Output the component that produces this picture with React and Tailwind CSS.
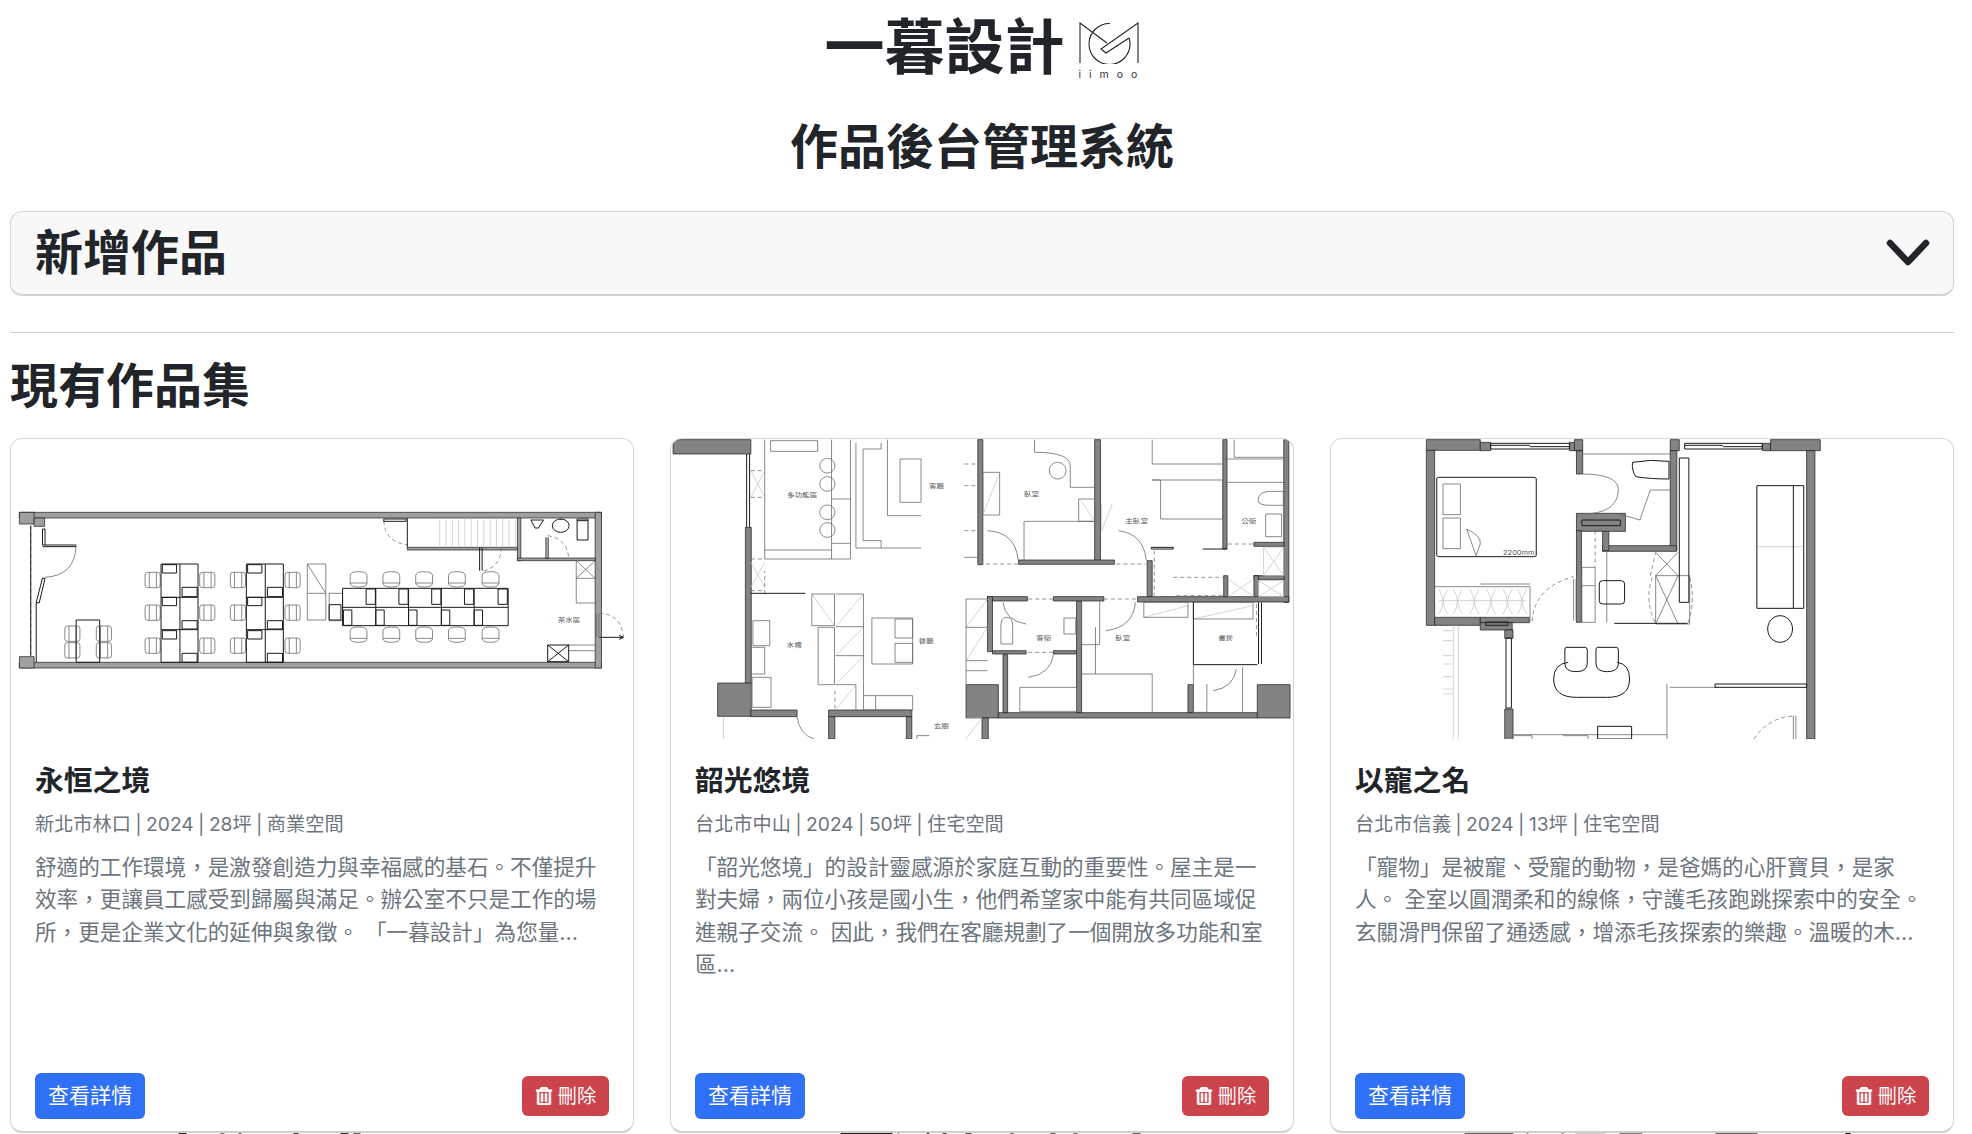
import { FaRegTrashAlt } from "react-icons/fa";

const FONT = "font-['Inter','Noto_Sans_CJK_TC',sans-serif]";

// floor plans are traced in zoom-crop units, so strokes must not scale with the box
function Plan({ box, wallFill = "#838383", walls = [], dark = "", thin = "", faint = "", dash = "", labels = [] }) {
  return (
    <svg viewBox={box} preserveAspectRatio="none" className="block h-[300px] w-full">
      {walls.map(([x, y, w, h], i) => (
        <rect key={i} x={x} y={y} width={w} height={h} fill={wallFill} stroke="#1c1c1c" strokeWidth="0.7" vectorEffect="non-scaling-stroke" />
      ))}
      <path d={faint} fill="none" stroke="#c9c9c9" strokeWidth="0.8" vectorEffect="non-scaling-stroke" />
      <path d={thin} fill="none" stroke="#6b6b6b" strokeWidth="0.8" vectorEffect="non-scaling-stroke" />
      <path d={dash} fill="none" stroke="#777" strokeWidth="0.8" strokeDasharray="4 3" vectorEffect="non-scaling-stroke" />
      <path d={dark} fill="none" stroke="#1a1a1a" strokeWidth="1" vectorEffect="non-scaling-stroke" />
      {labels.map(([x, y, t]) => (
        <text key={t + x} x={x} y={y} fontSize="18" fill="#555" textAnchor="middle">{t}</text>
      ))}
    </svg>
  );
}

const rect = (x, y, w, h) => `M${x} ${y}h${w}v${h}h${-w}z`;
const chairV = (x, y) => `M${x + 6} ${y}h${24}q6 0 6 8v30q0 8 -6 8h-24q-6 0 -6 -8v-30q0 -8 6 -8zM${x + 10} ${y}v46M${x + 27} ${y}v46`;
const chairH = (x, y) => `M${x} ${y + 12}q0 -12 20 -12t20 12v22q0 12 -20 12t-20 -12zM${x} ${y + 34}h40`;

const desks = (x) =>
  rect(x, 1090, 88, 295) + `M${x + 45} 1090V1385M${x} 1190H${x + 88}M${x} 1287H${x + 88}` +
  rect(x + 3, 1092, 34, 25) + rect(x + 50, 1160, 36, 28) + rect(x + 3, 1190, 34, 25) + rect(x + 50, 1260, 36, 25) + rect(x + 3, 1290, 34, 25) + rect(x + 50, 1358, 36, 27);
const deskChairs = (x) => [1115, 1213, 1312].map((y) => chairV(x - 38, y) + chairV(x + 92, y)).join("");

const longTable =
  rect(814, 1163, 394, 112) + "M814 1220H1208M893 1163V1220M971 1163V1220M1049 1163V1220M1127 1163V1220M893 1220V1275M971 1220V1275M1049 1220V1275M1127 1220V1275" +
  [870, 948, 1026, 1104, 1184].map((x) => rect(x, 1165, 22, 46)).join("") +
  [816, 893, 971, 1049, 1127].map((x) => rect(x, 1228, 20, 46)).join("");
const tableChairs = [832, 910, 988, 1066, 1146].map((x) => chairH(x, 1113) + chairH(x, 1279)).join("");

const plan1 = {
  box: "25 715 1480 900",
  wallFill: "#a0a0a0",
  walls: [[45, 935, 1385, 17], [45, 1385, 1385, 17], [1415, 935, 15, 467], [45, 935, 35, 35], [45, 1368, 35, 34], [80, 952, 25, 25], [968, 1040, 262, 8], [1230, 952, 8, 128], [1230, 1072, 185, 8]],
  dark:
    "M968 952V1040M100 1033H180M100 1038H180M100 1033V985H106V1033M100 1132L85 1205L92 1207L106 1134ZM85 1205V1385M72 975V1365" +
    desks(382) + desks(585) + longTable +
    rect(180, 1258, 56, 127) +
    rect(782, 1212, 28, 46) + rect(1302, 1333, 50, 50) + "M1302 1333L1352 1383M1352 1333L1302 1383M1298 1010V1075M1303 1010V1075M1425 1310H1482M1472 1304L1482 1310L1472 1316M912 955H965V962H912Z" +
    "M1262 958H1292L1280 982H1272ZM1372 955H1398V1018H1372ZM1140 1040V1110M1146 1040V1110M1372 960H1398" +
    "M1333 955V958M1313 975a20 20 0 1 0 40 0a20 20 0 1 0 -40 0",
  thin:
    "M180 1033Q178 1125 106 1130M730 1090h44v168h-44zM730 1090L774 1178M730 1178H774M782 1178h32v82h-32zM1370 1080V1207H1415M1370 1133H1415M1370 1080L1415 1133M1415 1080L1370 1133M1418 1238V1310M1424 1238V1310M1350 1333H1415M1352 1350H1415" +
    deskChairs(382) + deskChairs(585) + tableChairs + chairV(153, 1276) + chairV(228, 1276) + chairV(153, 1326) + chairV(228, 1326),
  dash: "M912 960Q915 1025 968 1032M1192 1040Q1190 1100 1146 1112M1302 1005Q1350 1015 1352 1075M1424 1238Q1478 1240 1482 1310M72 975V1365",
  faint: Array.from({ length: 13 }, (_, i) => `M${1045 + i * 15} 952V1040`).join(""),
  labels: [[1353, 1264, "茶水區"]],
};

const plan2 = {
  box: "25 25 1480 900",
  walls: [
    [30, 27, 185, 43], [202, 290, 14, 468], [136, 757, 80, 100], [215, 838, 110, 20], [400, 838, 198, 20], [400, 858, 15, 67], [585, 858, 13, 67],
    [727, 762, 77, 100], [1420, 762, 78, 100], [804, 846, 616, 16], [755, 27, 12, 375], [1033, 27, 14, 365], [852, 388, 228, 13], [1338, 27, 10, 328], [1483, 27, 12, 488],
    [1412, 335, 72, 12], [1158, 390, 12, 108], [778, 498, 95, 13], [935, 498, 120, 13], [1135, 498, 360, 16], [778, 498, 12, 165], [790, 660, 80, 10], [935, 660, 55, 10],
    [990, 512, 12, 334], [815, 672, 11, 174], [1255, 762, 13, 84], [1340, 435, 10, 63], [1412, 435, 72, 12], [1412, 435, 11, 63], [765, 862, 15, 63],
  ],
  dark: "M1423 515V700M1430 515V700M1268 702H1420M1268 514V702M1348 355H1290M1168 350H1220V355H1168ZM205 70V290M212 70V290M275 488H345M215 488H275",
  thin:
    "M248 27V385H452V27M248 358H407M407 27V385M407 205H452M407 338H452M465 37V352H620M482 55V330H525V352M482 55H525V37M540 27V255H620M570 85h50v130h-50z" +
    "M723 380H755M890 27V65Q975 65 975 105V170H1033M865 388V272H1033M995 205h38v67h-38zM767 125h40v128h-40zM262 30h112v32h-112zM1170 27V100H1338M1170 148H1338V265H1190V148H1170M1348 85H1483M1348 155H1483M1365 27V80H1483" +
    "M1422 210q0 -28 30 -28h30v42h-30q-30 0 -30 -14M1440 250h38v68h-38zM417 490H483V838M417 588H483M417 675H483M417 762H465V838M360 490H414V585H360zM375 590H414V762H375zM503 562H600V700H503zM558 565H600V622H558zM558 638H600V695H558z" +
    "M484 795H600V838H484M512 795V838M220 570h40v75h-40zM218 740h45v90h-45zM727 505V762M778 505H727M727 590H778M727 690H778M727 720H778M1002 730H1170V846M1035 590V730M1150 515H1255V560H1150zM855 770H990V842H855zM960 562h28v48h-28zM810 585q0 -25 14 -25t14 25v55h-28zM1268 515H1410V565H1268zM1268 702V846M1300 760V845H1268M1385 710V846H1420M215 650H248V730H215M1002 512V642H1045V512" +
    "M397 83a18 22 0 1 0 .1 0M397 138a18 22 0 1 0 .1 0M397 223a18 22 0 1 0 .1 0M397 276a18 22 0 1 0 .1 0M945 95a20 25 0 1 0 .1 0" +
    "M778 300Q845 305 851 388M1090 300Q1150 310 1156 390M815 515Q820 570 870 580M1130 515Q1125 590 1060 600M935 670Q930 730 875 740M1370 715Q1365 770 1315 780M325 858Q330 910 365 925M610 925V915H640",
  dash: "M215 120H248M215 200H248M215 385H248M215 480H248M723 100H755M723 165H755M723 300H755M248 490V420M775 400H850M1085 400H1155M875 505H935M1055 505H1135M875 665H935M1175 360V495M1220 440H1340V495H1220M1350 340H1410M415 780V838M1418 520V615",
  faint:
    "M215 120L248 200M248 120L215 200M215 395L248 470M248 395L215 470M1000 210L1033 270M1435 350H1483V435H1435zM1435 350L1483 435M1483 350L1435 435M1350 445L1412 498M1412 445L1350 498M1423 450H1483V498H1423zM1423 450L1483 498M1483 450L1423 498" +
    "M417 588L483 490M417 675L483 590M417 762L483 675M360 490L414 585M727 590L778 505M727 690L778 590M417 838L465 762M1150 560L1255 525M1268 565L1410 525M767 253L807 125M1050 220V300M1050 300L1075 220M150 858V925M727 862H765M727 925L765 862",
  labels: [[337, 198, "多功能區"], [657, 172, "客廳"], [883, 197, "臥室"], [1133, 278, "主臥室"], [1400, 278, "公衛"], [318, 648, "水槽"], [632, 637, "餐廳"], [912, 628, "客衛"], [1100, 628, "臥室"], [1345, 628, "書房"], [668, 893, "玄關"]],
};

const plan3 = {
  box: "25 25 1500 900",
  walls: [
    [255, 27, 130, 32], [385, 35, 25, 25], [600, 35, 30, 25], [612, 27, 20, 33], [843, 27, 22, 33], [1065, 38, 20, 22], [1085, 27, 120, 33], [255, 59, 20, 525], [275, 560, 110, 24], [385, 560, 118, 16], [385, 576, 77, 22], [444, 598, 20, 25], [444, 835, 20, 92],
    [1172, 60, 20, 865], [617, 60, 15, 70], [843, 60, 16, 300], [680, 345, 178, 17], [680, 300, 15, 60], [617, 248, 118, 54], [617, 300, 12, 275],
  ],
  dark:
    "M410 38H600V55H410zM410 44H505M505 48H600M878 38H1065V55H878zM878 44H970M970 48H1065M285 140h230q5 0 5 5v228q0 5 -5 5h-230q-5 0 -5 -5V145q0 -5 5 -5zM447 622H460V832H447zM708 578H885" +
    "M562 745q0 -45 35 -50M745 745q0 -45 -30 -50M562 745q0 55 55 55h75q53 0 53 -55M592 650h46q5 0 5 8v40q0 25 -27 25t-27 -25v-40q0 -8 3 -8zM667 650h46q5 0 5 8v40q0 25 -27 25t-27 -25v-40q0 -8 3 -8z" +
    "M1052 165H1165V533H1052zM1140 165V533M752 95Q795 85 840 92V145Q795 145 760 138Q750 120 752 95ZM1108 555a30 40 0 1 0 .1 0M680 450h45q8 0 8 10v50q0 10 -8 10h-45q-8 0 -8 -10v-50q0 -10 8 -10zM951 760H1172V770H951zM668 887H750V925H668zM888 82V515H865V82H888M398 574H452V584H398zM630 268H723V285H630z",
  thin:
    "M275 468H505V575M385 460H505M295 160h42v92h-42zM295 262h42v92h-42zM352 295Q388 315 385 340L375 375M352 295L375 375M610 445V570M616 445V570M465 912H835M585 915H645V925M465 915H510V925M1140 855V925M1146 855V925M835 760V925M842 770H955M690 360V575M808 435H890V580H808zM808 435L862 580M862 435L808 580M808 365L862 435M862 365L808 435" +
    "M630 250Q715 250 718 180Q720 130 630 130M720 250L770 268L795 178H843M632 70H843M630 410H662V575H630zM630 465H662",
  dash: "M510 572Q515 470 610 438M1045 925Q1080 860 1140 856M662 300V410M795 435L808 365M800 440Q780 510 808 580M890 440Q905 510 885 580",
  faint: [295, 330, 370, 410, 450, 485].map((x) => `M${x - 10} 475Q${x + 10} 515 ${x - 10} 550M${x + 12} 475Q${x - 10} 515 ${x + 12} 550`).join("") +
    "M285 510H495M320 584V925M332 584V925M295 600H318M295 630H318M295 675H318M295 700H318M295 738H318M295 775H318M295 790H318M1052 348H1165",
  labels: [[478, 373, "2200mm"]],
};

const works = [
  {
    title: "永恒之境",
    meta: "新北市林口 | 2024 | 28坪 | 商業空間",
    desc: "舒適的工作環境，是激發創造力與幸福感的基石。不僅提升效率，更讓員工感受到歸屬與滿足。辦公室不只是工作的場所，更是企業文化的延伸與象徵。 「一暮設計」為您量...",
    plan: plan1,
  },
  {
    title: "韶光悠境",
    meta: "台北市中山 | 2024 | 50坪 | 住宅空間",
    desc: "「韶光悠境」的設計靈感源於家庭互動的重要性。屋主是一對夫婦，兩位小孩是國小生，他們希望家中能有共同區域促進親子交流。 因此，我們在客廳規劃了一個開放多功能和室區...",
    plan: plan2,
  },
  {
    title: "以寵之名",
    meta: "台北市信義 | 2024 | 13坪 | 住宅空間",
    desc: "「寵物」是被寵、受寵的動物，是爸媽的心肝寶貝，是家人。 全室以圓潤柔和的線條，守護毛孩跑跳探索中的安全。玄關滑門保留了通透感，增添毛孩探索的樂趣。溫暖的木...",
    plan: plan3,
  },
];

// tops of the next row's pictures, just showing at the bottom edge of the window
const nextRow = [
  [[168, 8, "#333"], [210, 4, "#777"], [228, 3, "#555"], [283, 5, "#444"], [330, 8, "#333"], [343, 7, "#555"]],
  [[170, 52, "#222"], [227, 2, "#999"], [256, 3, "#333"], [272, 4, "#444"], [295, 6, "#555"], [340, 3, "#555"], [380, 5, "#555"], [403, 4, "#666"], [462, 8, "#666"]],
  [[134, 49, "#666"], [196, 2, "#777"], [231, 2, "#777"], [245, 30, "#ccc"], [289, 23, "#777"], [385, 42, "#666"], [515, 5, "#111"]],
];

function Card({ work }) {
  return (
    <div className="flex h-[695px] flex-col overflow-hidden rounded-xl border border-[#d6d6d6] border-b-2 border-b-[#cfcfcf] bg-white">
      <Plan {...work.plan} />
      <div className="flex flex-1 flex-col px-6 pb-3 pt-[24px]">
        <h5 className="text-[28.8px] font-bold leading-[35px] text-[#212529]">{work.title}</h5>
        <p className="mt-[12px] text-[19.2px] leading-[29px] text-[#6c757d] [word-spacing:-1px]">{work.meta}</p>
        <p className="mt-[12px] text-[21.6px] leading-[32.4px] text-[#6c757d]">{work.desc}</p>
        <div className="mt-auto flex items-center justify-between">
          <button type="button" className="h-[46px] w-[110px] rounded-md bg-[#3070f6] text-[21px] text-white">查看詳情</button>
          <button type="button" className="flex h-[40px] w-[87px] items-center justify-center gap-[5px] rounded-md bg-[#cb444b] text-[19.2px] text-white">
            <FaRegTrashAlt className="text-[18px]" stroke="currentColor" strokeWidth={24} />
            刪除
          </button>
        </div>
      </div>
    </div>
  );
}

export default function App() {
  return (
    <div className={`h-[1134px] overflow-hidden bg-white pl-[10px] pr-[18px] text-[#212529] ${FONT}`}>
      <header className="flex flex-col items-center">
        <div className="flex h-[89px] items-center gap-[14px] pt-[4px]">
          <h1 className="text-[60px] font-bold leading-none tracking-normal">一暮設計</h1>
          <div className="flex w-[61px] flex-col items-center pt-[10px]">
            <svg viewBox="0 0 60 42" className="h-[42px] w-[60px]" fill="none" stroke="#222" strokeWidth="1.1">
              <path d="M1 41V1L28 21M59 41V1L22 27L27 31L50 16" />
              <path d="M31 1.5A20.5 20.5 0 1 0 51 21.5A20 20 0 0 0 50 16" />
            </svg>
            <span className="mt-[6px] w-full whitespace-nowrap text-left text-[10.5px] leading-none tracking-[8px] text-[#333]">iimoo</span>
          </div>
        </div>
        <h2 className="mt-[29px] text-[48px] font-bold leading-[58px]">作品後台管理系統</h2>
      </header>

      <div className="mt-[35px] flex h-[85px] items-center justify-between rounded-xl border border-[#d3d3d3] border-b-2 bg-[#f8f8f8] pl-6 pr-[23px]">
        <span className="text-[48px] font-bold leading-none">新增作品</span>
        <svg viewBox="0 0 44 28" className="h-[28px] w-[44px]" fill="none" stroke="#212529" strokeWidth="6.5" strokeLinecap="round" strokeLinejoin="round">
          <path d="M4 4L22 23L40 4" />
        </svg>
      </div>

      <hr className="mt-[36px] border-t border-[#cfcfcf]" />

      <h2 className="mt-[24px] text-[48px] font-bold leading-[58px]">現有作品集</h2>

      <div className="mt-[23px] grid grid-cols-3 gap-x-[36px]">
        {works.map((work) => (
          <Card key={work.title} work={work} />
        ))}
      </div>

      <div className="grid grid-cols-3 gap-x-[36px]">
        {nextRow.map((marks, i) => (
          <svg key={i} viewBox="0 0 623 2" className="block h-[2px] w-full">
            {marks.map(([x, w, c]) => (
              <rect key={x} x={x} y="0" width={w} height="2" fill={c} />
            ))}
          </svg>
        ))}
      </div>
    </div>
  );
}
